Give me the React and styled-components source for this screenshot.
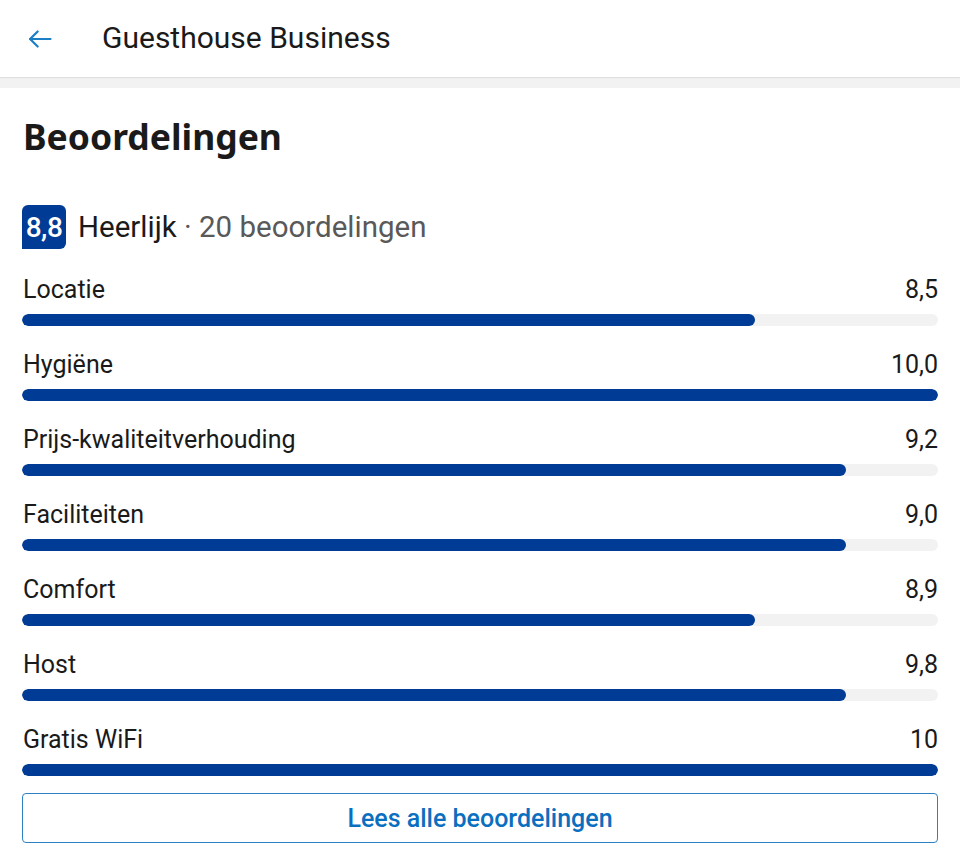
import React from "react";
import styled, { createGlobalStyle } from "styled-components";

const Global = createGlobalStyle`
  html, body { margin: 0; padding: 0; background: #fff; }
  body { font-family: Roboto, "Liberation Sans", sans-serif; color: #1a1a1a; }
  * { box-sizing: border-box; }
`;

const Page = styled.div`
  width: 960px;
  min-height: 849px;
  background: #fff;
`;

const TopBar = styled.header`
  height: 77px;
  display: flex;
  align-items: center;
  padding-left: 25px;
  gap: 47px;
  background: #fff;
  box-shadow: 0 1px 1px rgba(0, 0, 0, 0.08);
  position: relative;
  z-index: 1;
`;

const BackButton = styled.button`
  border: none;
  background: none;
  padding: 0;
  width: 30px;
  height: 30px;
  display: flex;
  align-items: center;
  justify-content: center;
  color: #1a7fc4;
`;

const Title = styled.h1`
  margin: 0;
  font-size: 30px;
  font-weight: 400;
  color: #1a1a1a;
  line-height: 34px;
  padding-bottom: 2px;
`;

const Band = styled.div`
  height: 11px;
  background: #f2f2f2;
`;

const Content = styled.main`
  padding: 0 22px;
`;

const Heading = styled.h2`
  margin: 0;
  padding-top: 24px;
  font-family: "Noto Sans", "Open Sans", sans-serif;
  font-weight: 700;
  font-size: 35.5px;
  line-height: 48px;
  color: #1a1a1a;
  padding-left: 1px;
`;

const Summary = styled.div`
  display: flex;
  align-items: center;
  gap: 12px;
  margin-top: 45px;
  height: 44px;
`;

const Badge = styled.div`
  width: 44px;
  height: 44px;
  background: #003b95;
  color: #fff;
  border-radius: 6px 6px 6px 0;
  display: flex;
  align-items: center;
  justify-content: center;
  font-size: 28px;
  font-weight: 500;
  letter-spacing: -0.5px;
`;

const SummaryText = styled.div`
  font-size: 29.5px;
  color: #1a1a1a;
  font-weight: 400;
`;

const Muted = styled.span`
  color: #595959;
`;

const List = styled.div`
  display: flex;
  flex-direction: column;
  margin-top: 26px;
`;

const Row = styled.div`
  height: 75px;
  display: flex;
  flex-direction: column;
`;

const RowHead = styled.div`
  display: flex;
  justify-content: space-between;
  align-items: baseline;
  font-size: 25px;
  line-height: 30px;
  color: #1a1a1a;
  padding-left: 1px;
`;

const Track = styled.div`
  margin-top: 9px;
  height: 12px;
  border-radius: 6px;
  background: #f2f2f2;
  overflow: hidden;
`;

const Fill = styled.div`
  height: 100%;
  border-radius: 6px;
  background: #003b95;
`;

const ReadAll = styled.button`
  width: 100%;
  height: 50px;
  margin-top: -7px;
  border: 1px solid #2b82c6;
  border-radius: 4px;
  background: #fff;
  font-family: Roboto, sans-serif;
  font-size: 25px;
  font-weight: 500;
  color: #0b6fc0;
`;

const scores = [
  ["Locatie", "8,5", 0.8],
  ["Hygiëne", "10,0", 1],
  ["Prijs-kwaliteitverhouding", "9,2", 0.9],
  ["Faciliteiten", "9,0", 0.9],
  ["Comfort", "8,9", 0.8],
  ["Host", "9,8", 0.9],
  ["Gratis WiFi", "10", 1],
];

export default function App() {
  return (
    <Page>
      <Global />
      <TopBar>
        <BackButton aria-label="Terug">
          <svg width="28" height="28" viewBox="0 0 24 24" fill="none" stroke="currentColor" strokeWidth="1.9" strokeLinecap="round" strokeLinejoin="round">
            <path d="M21 12H3.5" />
            <path d="M10 5.5L3.5 12l6.5 6.5" />
          </svg>
        </BackButton>
        <Title>Guesthouse Business</Title>
      </TopBar>
      <Band />
      <Content>
        <Heading>Beoordelingen</Heading>
        <Summary>
          <Badge>8,8</Badge>
          <SummaryText>
            Heerlijk <Muted>· 20 beoordelingen</Muted>
          </SummaryText>
        </Summary>
        <List>
          {scores.map(([label, value, pct]) => (
            <Row key={label}>
              <RowHead>
                <span>{label}</span>
                <span>{value}</span>
              </RowHead>
              <Track>
                <Fill style={{ width: `${pct * 100}%` }} />
              </Track>
            </Row>
          ))}
        </List>
        <ReadAll>Lees alle beoordelingen</ReadAll>
      </Content>
    </Page>
  );
}
